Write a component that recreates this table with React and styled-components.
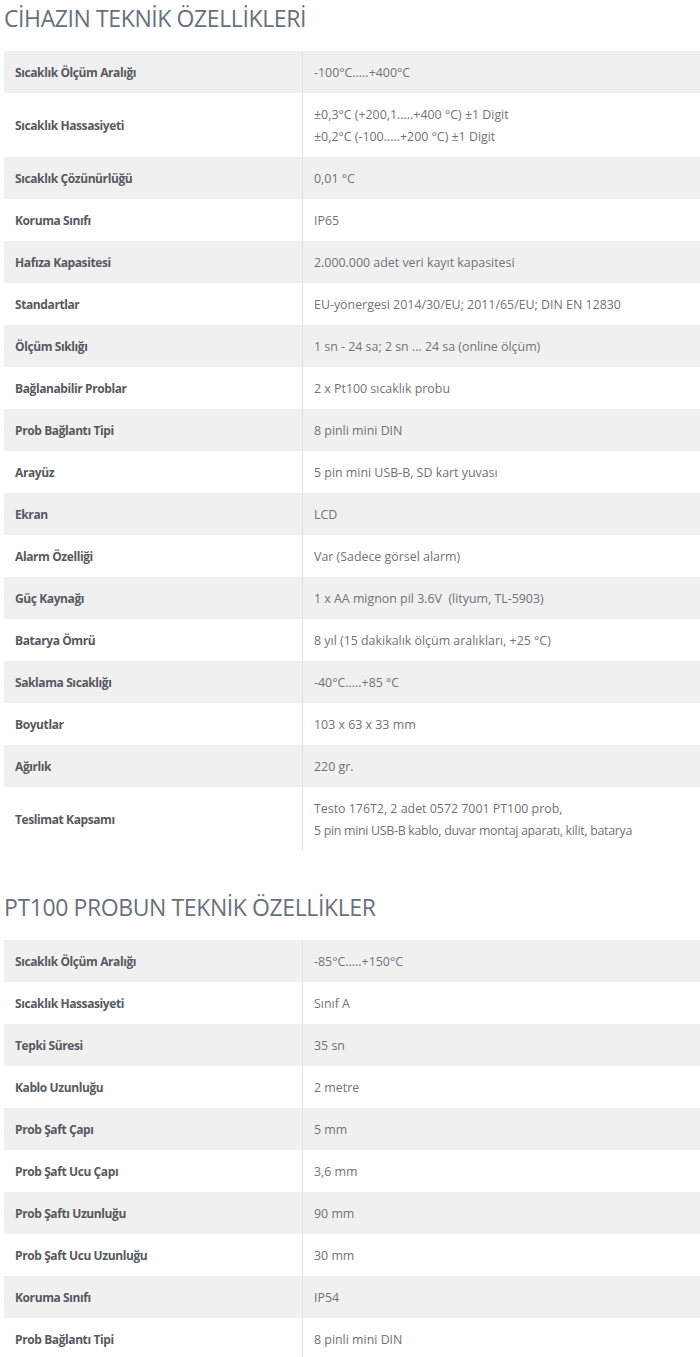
import React from "react";
import styled, { createGlobalStyle } from "styled-components";

const GlobalStyle = createGlobalStyle`
  body {
    margin: 0;
    background: #fff;
    font-family: "Open Sans", "Liberation Sans", sans-serif;
  }
`;

const Page = styled.div`
  padding: 0 0 0 4px;
`;

const Title = styled.h2`
  margin: 0;
  height: 51px;
  box-sizing: border-box;
  font-family: "Open Sans", sans-serif;
  font-weight: 400;
  font-size: 23px;
  line-height: 36px;
  color: #66717d;
  letter-spacing: -0.4px;
`;

const Table = styled.div`
  display: flex;
  flex-direction: column;
`;

const Row = styled.div`
  display: grid;
  grid-template-columns: 298px 1fr;
  background: ${props => (props.striped ? "#f0f0f0" : "#fff")};
`;

const Label = styled.div`
  padding: 11px 11px 9px;
  font-size: 12px;
  font-weight: 700;
  line-height: 22px;
  color: #555a60;
  display: flex;
  align-items: center;
  letter-spacing: -0.4px;
`;

const Value = styled.div`
  padding: 11px 11px 9px;
  border-left: 1px solid #e2e2e2;
  font-size: 12.4px;
  line-height: 22px;
  color: #6f7378;
  white-space: pre;
`;

const Line = styled.div`
  letter-spacing: ${props => props.tight ? "-0.3px" : "0"};
`;

const Spacer = styled.div`
  height: 38px;
`;

const device = [
  ["Sıcaklık Ölçüm Aralığı", ["-100°C.....+400°C"]],
  ["Sıcaklık Hassasiyeti", ["±0,3°C (+200,1.....+400 °C) ±1 Digit", "±0,2°C (-100.....+200 °C) ±1 Digit"]],
  ["Sıcaklık Çözünürlüğü", ["0,01 °C"]],
  ["Koruma Sınıfı", ["IP65"]],
  ["Hafıza Kapasitesi", ["2.000.000 adet veri kayıt kapasitesi"]],
  ["Standartlar", ["EU-yönergesi 2014/30/EU; 2011/65/EU; DIN EN 12830"]],
  ["Ölçüm Sıklığı", ["1 sn - 24 sa; 2 sn ... 24 sa (online ölçüm)"]],
  ["Bağlanabilir Problar", ["2 x Pt100 sıcaklık probu"]],
  ["Prob Bağlantı Tipi", ["8 pinli mini DIN"]],
  ["Arayüz", ["5 pin mini USB-B, SD kart yuvası"]],
  ["Ekran", ["LCD"]],
  ["Alarm Özelliği", ["Var (Sadece görsel alarm)"]],
  ["Güç Kaynağı", ["1 x AA mignon pil 3.6V  (lityum, TL-5903)"]],
  ["Batarya Ömrü", ["8 yıl (15 dakikalık ölçüm aralıkları, +25 °C)"]],
  ["Saklama Sıcaklığı", ["-40°C.....+85 °C"]],
  ["Boyutlar", ["103 x 63 x 33 mm"]],
  ["Ağırlık", ["220 gr."]],
  ["Teslimat Kapsamı", ["Testo 176T2, 2 adet 0572 7001 PT100 prob,", "5 pin mini USB-B kablo, duvar montaj aparatı, kilit, batarya"]],
];

const probe = [
  ["Sıcaklık Ölçüm Aralığı", ["-85°C.....+150°C"]],
  ["Sıcaklık Hassasiyeti", ["Sınıf A"]],
  ["Tepki Süresi", ["35 sn"]],
  ["Kablo Uzunluğu", ["2 metre"]],
  ["Prob Şaft Çapı", ["5 mm"]],
  ["Prob Şaft Ucu Çapı", ["3,6 mm"]],
  ["Prob Şaftı Uzunluğu", ["90 mm"]],
  ["Prob Şaft Ucu Uzunluğu", ["30 mm"]],
  ["Koruma Sınıfı", ["IP54"]],
  ["Prob Bağlantı Tipi", ["8 pinli mini DIN"]],
];

function SpecTable({ rows }) {
  return (
    <Table>
      {rows.map(([label, lines], i) => (
        <Row key={label + i} striped={i % 2 === 0}>
          <Label>{label}</Label>
          <Value>
            {lines.map(l => (
              <Line key={l} tight={l.length > 50}>{l}</Line>
            ))}
          </Value>
        </Row>
      ))}
    </Table>
  );
}

export default function App() {
  return (
    <Page>
      <GlobalStyle />
      <Title>CİHAZIN TEKNİK ÖZELLİKLERİ</Title>
      <SpecTable rows={device} />
      <Spacer />
      <Title>PT100 PROBUN TEKNİK ÖZELLİKLER</Title>
      <SpecTable rows={probe} />
    </Page>
  );
}
